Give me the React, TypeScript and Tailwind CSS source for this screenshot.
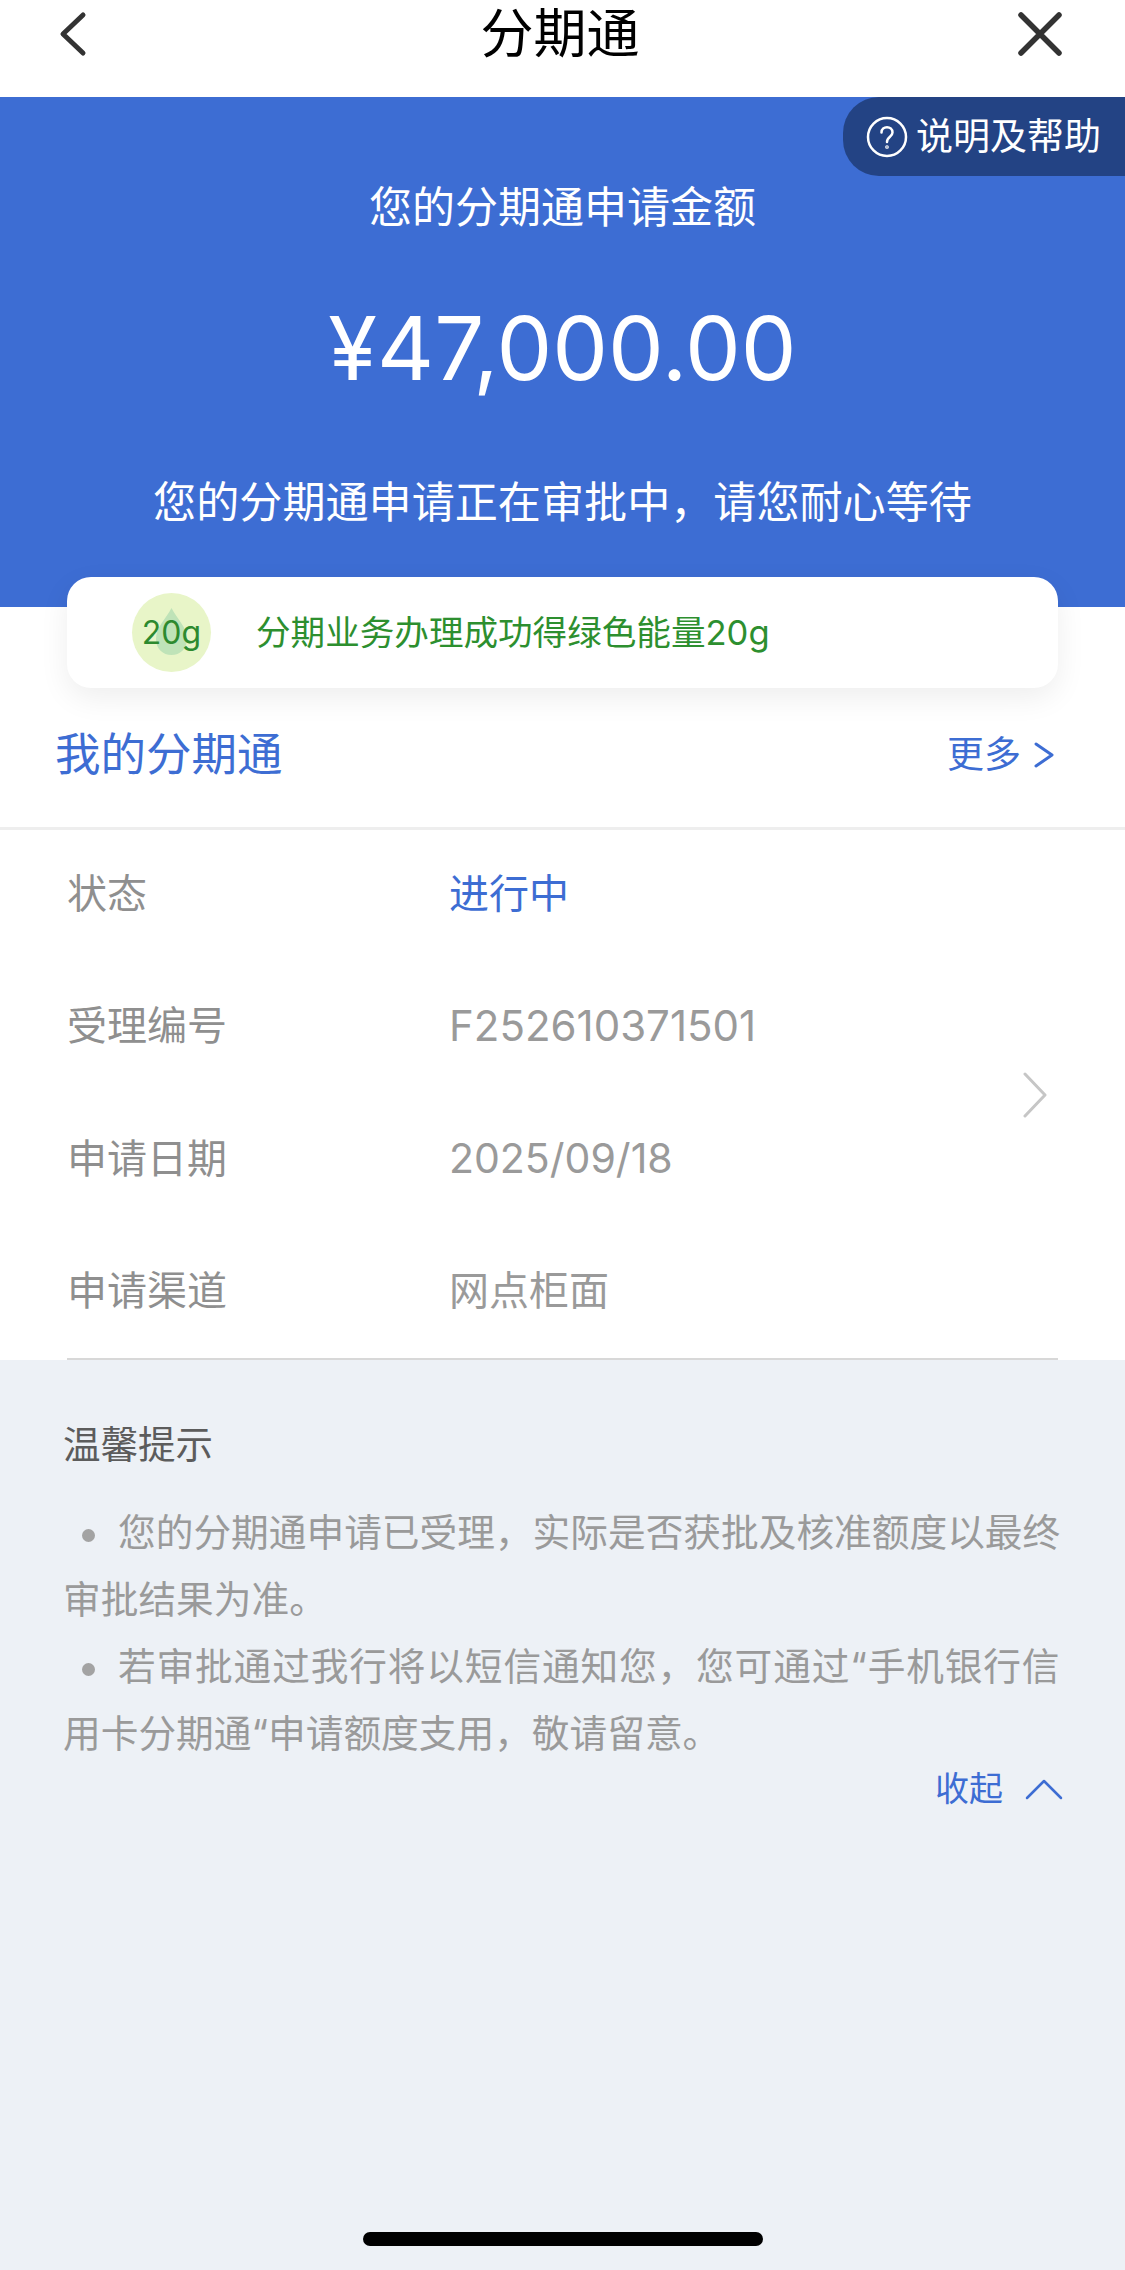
const rows = [
  { label: "状态", value: "进行中", valueClassName: "text-[40px] text-[#3d6dd3]" },
  { label: "受理编号", value: "F252610371501", valueClassName: "text-[42px] text-[#9a9a9a]" },
  { label: "申请日期", value: "2025/09/18", valueClassName: "text-[41px] text-[#9a9a9a]" },
  { label: "申请渠道", value: "网点柜面", valueClassName: "text-[40px] text-[#9a9a9a]" },
];

function Bullet() {
  return <span className="mr-[23px] ml-[19px] inline-block h-[13px] w-[13px] rounded-full bg-[#a3a3a3] align-[4px]" />;
}

export default function App() {
  return (
    <div className="flex h-[2270px] w-[1125px] flex-col overflow-hidden bg-white font-['Inter','Noto_Sans_CJK_SC',sans-serif]">
      {/* Top bar */}
      <header className="flex h-[97px] items-start justify-between pl-[57px] pr-[62px]">
        <div className="w-[120px]">
          <svg className="mt-[11px]" width="30" height="46" viewBox="0 0 30 46" fill="none" stroke="#333" strokeWidth="5" strokeLinecap="round" strokeLinejoin="round">
            <path d="M26 4 L6 23 L26 42" />
          </svg>
        </div>
        <h1 className="text-[53px] leading-[68px] font-normal text-black">分期通</h1>
        <div className="flex w-[120px] justify-end">
          <svg className="mt-[11px]" width="46" height="46" viewBox="0 0 46 46" fill="none" stroke="#333" strokeWidth="5.5" strokeLinecap="round">
            <path d="M4 4 L42 42 M42 4 L4 42" />
          </svg>
        </div>
      </header>

      {/* Blue summary */}
      <section className="relative flex h-[510px] flex-col items-center bg-[#3d6dd3] pt-[81px] text-white">
        <div className="absolute top-0 right-0 flex h-[79px] w-[282px] items-center gap-[8px] rounded-l-[36px] bg-[#234384] pl-[23px]">
          <svg width="42" height="42" viewBox="0 0 42 42" fill="none" stroke="white" strokeWidth="2.5" strokeLinecap="round">
            <circle cx="21" cy="21" r="19" />
            <path d="M15.5 16.5 C15.5 9.5 26.5 9.5 26.5 16.5 C26.5 21 21 20.5 21 26" />
            <circle cx="21" cy="31" r="0.6" />
          </svg>
          <span className="text-[37px] leading-none whitespace-nowrap">说明及帮助</span>
        </div>
        <p className="text-[43px] leading-[58px]">您的分期通申请金额</p>
        <p className="mt-[58px] text-[88.5px] leading-[108px] font-['Inter',sans-serif]">¥47,000.00</p>
        <p className="mt-[71px] text-[43.1px] leading-[58px]">您的分期通申请正在审批中，请您耐心等待</p>
      </section>

      {/* Green energy card */}
      <div className="relative mx-[67px] -mt-[30px] flex h-[111px] items-center rounded-[24px] bg-white pl-[65px] shadow-[0_10px_30px_rgba(0,0,0,0.07)]">
        <div className="relative flex h-[79px] w-[79px] items-center justify-center rounded-full bg-[#e8f5c8]">
          <svg className="absolute top-[14px] left-[22px]" width="35" height="50" viewBox="0 0 35 50">
            <path d="M17.5 1 C23 12 33 20 33 32 C33 42 26 48 17.5 48 C9 48 2 42 2 32 C2 20 12 12 17.5 1 Z" fill="#bfe3b8" />
          </svg>
          <span className="relative text-[32px] leading-none text-[#2d8a2f]">20g</span>
        </div>
        <span className="ml-[45px] text-[34.6px] leading-none text-[#2d8f2f]">分期业务办理成功得绿色能量20g</span>
      </div>

      {/* Section title */}
      <div className="flex h-[142px] items-center justify-between border-b-[3px] border-[#eeeeee] pr-[70px] pb-[6px] pl-[55px] text-[#3d6dd3]">
        <h2 className="text-[45.5px] leading-none font-normal">我的分期通</h2>
        <div className="flex items-center gap-[12px] text-[37px] leading-none">
          <span>更多</span>
          <svg width="22" height="28" viewBox="0 0 22 28" fill="none" stroke="#3d6dd3" strokeWidth="3" strokeLinecap="round" strokeLinejoin="round">
            <path d="M3 3 L19 14 L3 25" />
          </svg>
        </div>
      </div>

      {/* Details */}
      <div className="flex h-[530px] items-center pr-[78px] pb-[5px] pl-[67px]">
        <div className="flex flex-1 flex-col">
          {rows.map((row) => (
            <div key={row.label} className="flex h-[132.5px] items-center leading-none">
              <span className="w-[382px] text-[40px] text-[#8f8f8f]">{row.label}</span>
              <span className={row.valueClassName}>{row.value}</span>
            </div>
          ))}
        </div>
        <svg className="mt-[5px]" width="24" height="46" viewBox="0 0 24 46" fill="none" stroke="#c6c6c6" strokeWidth="3" strokeLinecap="round" strokeLinejoin="round">
          <path d="M2 2 L22 23 L2 44" />
        </svg>
      </div>

      {/* Tips */}
      <section className="relative flex flex-1 flex-col bg-[#edf1f6] pt-[60px] pr-[62px] pl-[63px]">
        <div className="absolute top-0 right-[67px] left-[67px] -mt-[2px] h-[2px] bg-[#d8d8d8]" />
        <h3 className="text-[37.5px] leading-[50px] font-normal text-[#5c5c5c]">温馨提示</h3>
        <div className="mt-[29px] text-[37.7px] leading-[67px] whitespace-nowrap text-[#9a9a9a]">
          <p>
            <Bullet />
            您的分期通申请已受理，实际是否获批及核准额度以最终
            <br />
            审批结果为准。
          </p>
          <p>
            <Bullet />
            <span className="tracking-[0.85px]">若审批通过我行将以短信通知您，您可通过“手机银行信</span>
            <br />
            用卡分期通“申请额度支用，敬请留意。
          </p>
        </div>
        <div className="mt-[5px] flex items-center justify-end gap-[22px] text-[34px] leading-none text-[#3d6dd3]">
          <span>收起</span>
          <svg width="38" height="22" viewBox="0 0 38 22" fill="none" stroke="#3d6dd3" strokeWidth="2.5" strokeLinecap="round" strokeLinejoin="round">
            <path d="M2 20 L19 3 L36 20" />
          </svg>
        </div>
        <div className="mt-auto mb-[24px] flex justify-center">
          <div className="h-[14px] w-[400px] rounded-full bg-black" />
        </div>
      </section>
    </div>
  );
}
